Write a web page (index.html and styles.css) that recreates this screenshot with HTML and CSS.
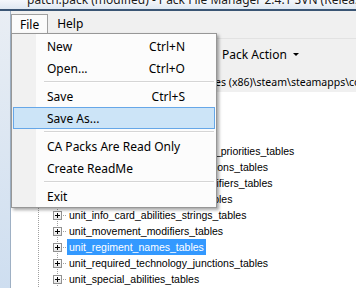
FILE: index.html
```html
<!DOCTYPE html>
<html>
	<head>
		<meta charset="utf-8">
		<title>Pack File Manager</title>
		<link rel="stylesheet" href="styles.css">
	</head>
<body>

<div id="window">
	<div id="titlebar">
		<span id="title">patch.pack (modified) - Pack File Manager 2.4.1 SVN (Release)</span>
	</div>
	<div id="frame">
		<div id="edge"></div>
		<div id="client">
			<div id="menubar">
				<span class="mitem open">File</span>
				<span class="mitem">Help</span>
			</div>
			<div id="toolbar">
				<span class="tbtn">Pack Action <span class="caret"></span></span>
			</div>
			<div id="pathbar">C:\Program Files (x86)\steam\steamapps\common\total war shogun 2\data\patch.pack</div>
			<div id="tree">
				<div class="node"><span class="exp"></span><span class="dots"></span><span class="label">unit_abilities_tables</span></div>
				<div class="node"><span class="exp"></span><span class="dots"></span><span class="label">unit_ability_types_tables</span></div>
				<div class="node"><span class="exp"></span><span class="dots"></span><span class="label">unit_additional_ui_tables</span></div>
				<div class="node"><span class="exp"></span><span class="dots"></span><span class="label">unit_ai_formations_deployment_priorities_tables</span></div>
				<div class="node"><span class="exp"></span><span class="dots"></span><span class="label">unit_experience_bonus_restrictions_tables</span></div>
				<div class="node"><span class="exp"></span><span class="dots"></span><span class="label">unit_fatigue_effects_stats_amplifiers_tables</span></div>
				<div class="node"><span class="exp"></span><span class="dots"></span><span class="label">unit_ground_type_modifiers_tables</span></div>
				<div class="node"><span class="exp"></span><span class="dots"></span><span class="label">unit_info_card_abilities_strings_tables</span></div>
				<div class="node"><span class="exp"></span><span class="dots"></span><span class="label">unit_movement_modifiers_tables</span></div>
				<div class="node"><span class="exp"></span><span class="dots"></span><span class="label selected">unit_regiment_names_tables</span></div>
				<div class="node"><span class="exp"></span><span class="dots"></span><span class="label">unit_required_technology_junctions_tables</span></div>
				<div class="node"><span class="exp"></span><span class="dots"></span><span class="label">unit_special_abilities_tables</span></div>
			</div>
		</div>
	</div>

	<div id="menu">
		<div class="menu-item"><span>New</span><span>Ctrl+N</span></div>
		<div class="menu-item"><span>Open...</span><span>Ctrl+O</span></div>
		<div class="sep"></div>
		<div class="menu-item"><span>Save</span><span>Ctrl+S</span></div>
		<div class="menu-item hot"><span>Save As...</span></div>
		<div class="sep"></div>
		<div class="menu-item"><span>CA Packs Are Read Only</span></div>
		<div class="menu-item"><span>Create ReadMe</span></div>
		<div class="sep"></div>
		<div class="menu-item"><span>Exit</span></div>
	</div>
</div>

</body>
</html>
```

FILE: styles.css
```css
body {
	margin:0px;
	width:356px;
	height:288px;
	overflow:hidden;

	background-color:white;
	font-family:"Noto Sans", "Liberation Sans", sans-serif;
}

#window {
	position:relative;
	width:356px;
	height:288px;
}

/* window caption, only its lower edge is on screen */
#titlebar {
	height:9px;
	overflow:hidden;

	background:linear-gradient(#f4f7fb, #dfe8f2);
	border-bottom:2px solid #3a5574;
}
#title {
	display:block;
	margin:-7px 0px 0px 27px;

	font-size:12px;
	line-height:14px;
	color:#1b1b1b;
	white-space:nowrap;
	text-shadow:0px 0px 3px #ffffff;
}

#frame {
	display:flex;
	height:277px;
}
#edge {
	width:10px;

	background:linear-gradient(#e9eef4, #cedef0);
	border-right:1px solid #9eb0c4;
}
#client {
	flex:1;
	display:flex;
	flex-direction:column;
	min-width:0px;
}

#menubar {
	display:flex;
	align-items:flex-start;
	height:27px;

	background-color:#f0f0f0;
	font-size:12px;
}
.mitem {
	margin-top:3px;
	padding:0px 9px;
	line-height:20px;
	color:black;
}
.mitem.open {
	box-sizing:border-box;
	height:20px;
	padding:0px 8px;
	line-height:19px;

	background-color:#fbfbfb;
	border:1px solid #a0a0a0;
	border-bottom:none;
}

#toolbar {
	display:flex;
	align-items:center;
	height:31px;
	padding-left:211px;

	background-color:#f0f0f0;
	border-top:1px solid #e2e2e2;
	font-size:12px;
}
.tbtn {
	display:flex;
	align-items:center;
	gap:6px;
	white-space:nowrap;
}
.caret {
	width:0px;
	height:0px;

	border-left:3px solid transparent;
	border-right:3px solid transparent;
	border-top:3px solid black;
}

#pathbar {
	height:22px;
	padding-left:134px;

	background-color:#f0f0f0;
	font-size:10.5px;
	line-height:24px;
	white-space:nowrap;
	overflow:hidden;
}

#tree {
	flex:1;
	padding-top:3px;

	background:repeating-linear-gradient(to bottom, #a0a0a0 0px 1px, transparent 1px 2px) 27px 0px / 1px 100% no-repeat, white;
	font-family:"Liberation Sans", Arial, sans-serif;
	font-size:10.5px;
}
.node {
	display:flex;
	align-items:center;
	height:16px;
	padding-left:42px;

	background:repeating-linear-gradient(to bottom, #a0a0a0 0px 1px, transparent 1px 2px) 46px 0px / 1px 100% no-repeat;
}
.exp {
	position:relative;
	box-sizing:border-box;
	width:9px;
	height:9px;

	background:linear-gradient(#ffffff, #e6e6e6);
	border:1px solid #919191;
}
.exp::before {
	content:"";
	position:absolute;
	left:1px;
	top:3px;
	width:5px;
	height:1px;
	background-color:black;
}
.exp::after {
	content:"";
	position:absolute;
	left:3px;
	top:1px;
	width:1px;
	height:5px;
	background-color:black;
}
.dots {
	width:4px;
	height:1px;
	margin-left:1px;

	background:repeating-linear-gradient(to right, #a0a0a0 0px 1px, transparent 1px 2px);
}
.label {
	padding:0px 2px;
	line-height:16px;
	white-space:nowrap;
	color:black;
}
.selected {
	background-color:#3399ff;
	color:white;
}

/* open File menu */
#menu {
	position:absolute;
	left:11px;
	top:33px;
	box-sizing:border-box;
	width:206px;
	padding:1px 1px 0px 1px;

	background:linear-gradient(to right, #f1f1f1 0px 24px, #fcfcfc 24px);
	border:1px solid #979797;
	box-shadow:2px 2px 3px rgba(0, 0, 0, .35);
	font-size:12px;
}
.menu-item {
	display:flex;
	justify-content:space-between;
	align-items:center;
	box-sizing:border-box;
	height:22px;
	padding:0px 29px 0px 33px;

	border:1px solid transparent;
	white-space:nowrap;
	color:black;
}
.menu-item.hot {
	background-color:#cce4f7;
	border-color:#66a7e8;
}
.sep {
	height:6px;
	margin-left:31px;
	margin-right:1px;

	background:linear-gradient(to bottom, transparent 2px, #d5d5d5 2px 3px, #ffffff 3px 4px, transparent 4px);
}
```
